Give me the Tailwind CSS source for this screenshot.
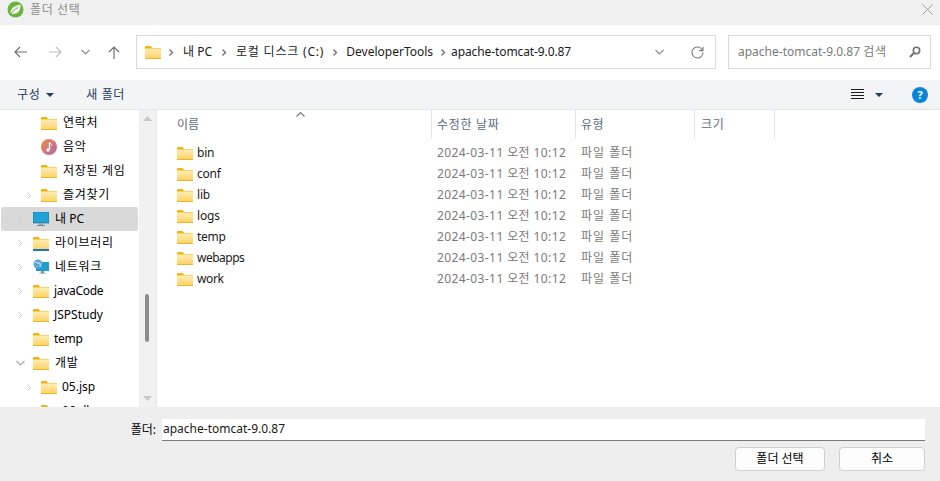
<!DOCTYPE html>
<html lang="ko"><head><meta charset="utf-8">
<script src="https://cdn.jsdelivr.net/npm/@tailwindcss/browser@4"></script>
</head>
<body class="relative w-[940px] h-[481px] overflow-hidden bg-white text-[12px] leading-[16px] text-black font-['Noto_Sans','Noto_Sans_CJK_KR',sans-serif]">
<svg class="absolute w-0 h-0" width="0" height="0">
<defs>
<linearGradient id="fg" x1="0" y1="0" x2="0" y2="1"><stop offset="0" stop-color="#ffeeb8"/><stop offset="1" stop-color="#fdd05f"/></linearGradient>
<symbol id="folder" viewBox="0 0 16 14"><path d="M0 2a1 1 0 0 1 1-1h4.500l2 2H15a1 1 0 0 1 1 1v9a1 1 0 0 1-1 1H1a1 1 0 0 1-1-1z" fill="#f5b50f"/><rect x="0" y="3.400" width="16" height="10.600" rx="1" fill="url(#fg)"/><rect x="0" y="13" width="16" height="1" fill="#f0b429"/></symbol>
<symbol id="chev" viewBox="0 0 8 12"><path d="M2 2l4 4-4 4" fill="none" stroke="#c4c4c4" stroke-width="1.300"/></symbol>
</defs>
</svg>

<!-- title bar -->
<div class="h-[25px] bg-[#f0f0f0] flex items-center pl-[7px] pr-[7px] pb-[7px]">
<svg width="17" height="17" viewBox="0 0 17 17"><circle cx="8.500" cy="8.500" r="8" fill="#6db33f"/><path d="M3.500 12.500C3 7.500 7.500 4.500 13.500 3.500c.5 5-2.500 9.500-7.500 9.500-1 0-2-.2-2.500-.5z" fill="#f4f8ee"/><path d="M4 13c2-3 4-5 7-6.500" stroke="#6db33f" fill="none"/></svg>
<span class="ml-[6px] mt-[1px] text-[#8f8f8f] tracking-[0.6px]">폴더 선택</span>
<svg class="ml-auto" width="11" height="11" viewBox="0 0 11 11"><path d="M.5.5l10 10M10.500.5l-10 10" stroke="#9a9a9a" fill="none"/></svg>
</div>

<!-- nav bar -->
<div class="h-[55px] bg-white flex items-center pb-[1px]">
<svg class="ml-[14px]" width="13" height="12" viewBox="0 0 13 12"><path d="M13 6H1M6 1L1 6l5 5" fill="none" stroke="#6f6f6f" stroke-width="1.200"/></svg>
<svg class="ml-[22px]" width="13" height="12" viewBox="0 0 13 12"><path d="M0 6h12M7 1l5 5-5 5" fill="none" stroke="#bdbdbd" stroke-width="1.200"/></svg>
<svg class="ml-[19px]" width="9" height="6" viewBox="0 0 9 6"><path d="M.5 1l4 4 4-4" fill="none" stroke="#8a8a8a" stroke-width="1.100"/></svg>
<svg class="ml-[18px]" width="12" height="13" viewBox="0 0 12 13"><path d="M6 13V1M1 6l5-5 5 5" fill="none" stroke="#6f6f6f" stroke-width="1.200"/></svg>
<div class="ml-[16px] w-[580px] h-[34px] border border-[#d9d9d9] flex items-center text-[#1a1a1a]">
<svg class="ml-[8px]" width="16" height="14"><use href="#folder"/></svg>
<svg class="ml-[7px]" width="6" height="9" viewBox="0 0 8 12"><path d="M2 2l4 4-4 4" fill="none" stroke="#666" stroke-width="1.600"/></svg>
<span class="ml-[9px]">내 PC</span>
<svg class="ml-[9px]" width="6" height="9" viewBox="0 0 8 12"><path d="M2 2l4 4-4 4" fill="none" stroke="#666" stroke-width="1.600"/></svg>
<span class="ml-[9px] tracking-[0.8px]">로컬 디스크 (C:)</span>
<svg class="ml-[8px]" width="6" height="9" viewBox="0 0 8 12"><path d="M2 2l4 4-4 4" fill="none" stroke="#666" stroke-width="1.600"/></svg>
<span class="ml-[8px]">DeveloperTools</span>
<svg class="ml-[7px]" width="6" height="9" viewBox="0 0 8 12"><path d="M2 2l4 4-4 4" fill="none" stroke="#666" stroke-width="1.600"/></svg>
<span class="ml-[5px] tracking-[-0.1px]">apache-tomcat-9.0.87</span>
<svg class="ml-auto" width="9" height="6" viewBox="0 0 9 6"><path d="M.5 1l4 4 4-4" fill="none" stroke="#8a8a8a" stroke-width="1.100"/></svg>
<svg class="ml-[27px] mr-[11px]" width="13" height="13" viewBox="0 0 13 13"><path d="M11.500 4.200A5.500 5.500 0 1 0 12 6.500M12 .8v3.800H8.200" fill="none" stroke="#7d7d7d" stroke-width="1.100"/></svg>
</div>
<div class="ml-[12px] w-[203px] h-[34px] border border-[#d9d9d9] flex items-center pl-[9px] text-[#7a7a7a]">
<span>apache-tomcat-9.0.87 <span class="tracking-[0.8px]">검색</span></span>
<svg class="ml-auto mr-[9px]" width="12" height="12" viewBox="0 0 12 12"><circle cx="7.500" cy="4.500" r="3.200" fill="none" stroke="#6f6f6f" stroke-width="1.600"/><path d="M5 7L1 11" stroke="#6f6f6f" stroke-width="2"/></svg>
</div>
</div>

<!-- toolbar -->
<div class="h-[30px] bg-[#f3f4f6] border-b border-[#e6e6e6] flex items-center text-[#1f3a5f]">
<span class="ml-[17px] tracking-[0.6px]">구성</span>
<svg class="ml-[6px]" width="8" height="4" viewBox="0 0 8 4"><path d="M0 0h8L4 4z" fill="#1f3a5f"/></svg>
<span class="ml-[32px] tracking-[0.6px]">새 폴더</span>
<svg class="ml-auto" width="13" height="11" viewBox="0 0 13 11"><path d="M0 .5h13M0 3.500h13M0 6.500h13M0 9.500h13" stroke="#1a1a1a"/></svg>
<svg class="ml-[11px]" width="8" height="4" viewBox="0 0 8 4"><path d="M0 0h8L4 4z" fill="#1f3a5f"/></svg>
<div class="ml-[29px] mr-[12px] w-[16px] h-[16px] rounded-full bg-[#0a84d8] text-white flex items-center justify-center text-[11px] font-bold">?</div>
</div>

<!-- main -->
<div class="h-[297px] flex overflow-hidden">
<!-- sidebar -->
<div class="w-[139px] shrink-0 overflow-hidden pl-[1px] pr-[1px] pt-[1px]">
<div class="h-[24px] flex items-center pl-[40px]"><svg width="16" height="14"><use href="#folder"/></svg><span class="ml-[6px] tracking-[0.7px]">연락처</span></div>
<div class="h-[24px] flex items-center pl-[40px]"><svg width="16" height="16" viewBox="0 0 16 16"><defs><linearGradient id="mu" x1="0" y1="0" x2="1" y2="1"><stop offset="0" stop-color="#ee8a4a"/><stop offset="1" stop-color="#b565a8"/></linearGradient></defs><circle cx="8" cy="8" r="8" fill="url(#mu)"/><path d="M8.500 3.500v7" stroke="#fff" stroke-width="1.400"/><circle cx="7" cy="11" r="1.700" fill="#fff"/><path d="M8.500 3.500c1 1.500 2.500 1.500 2.500 3" stroke="#fff" fill="none"/></svg><span class="ml-[6px] tracking-[0.7px]">음악</span></div>
<div class="h-[24px] flex items-center pl-[40px]"><svg width="16" height="14"><use href="#folder"/></svg><span class="ml-[6px] tracking-[0.7px]">저장된 게임</span></div>
<div class="h-[24px] flex items-center pl-[25px]"><svg width="6" height="9" viewBox="0 0 8 12"><use href="#chev"/></svg><svg class="ml-[9px]" width="16" height="14"><use href="#folder"/></svg><span class="ml-[6px] tracking-[0.7px]">즐겨찾기</span></div>
<div class="h-[24px] flex items-center pl-[16px] bg-[#d9d9d9] rounded-[2px]"><svg width="6" height="9" viewBox="0 0 8 12"><use href="#chev"/></svg><svg class="ml-[10px]" width="16" height="15" viewBox="0 0 16 15"><rect x="0" y="0" width="16" height="11" fill="#1fa3d6" stroke="#17617f" stroke-width=".6"/><path d="M6 11h4v2H6z" fill="#9aa5ad"/><path d="M4 13.500h8" stroke="#7b868e"/></svg><span class="ml-[6px]">내 PC</span></div>
<div class="h-[24px] flex items-center pl-[16px]"><svg width="6" height="9" viewBox="0 0 8 12"><use href="#chev"/></svg><svg class="ml-[10px]" width="16" height="15" viewBox="0 0 16 15"><use href="#folder" width="16" height="14"/><rect y="13" width="16" height="2" fill="#1a78c2"/></svg><span class="ml-[6px] tracking-[0.7px]">라이브러리</span></div>
<div class="h-[24px] flex items-center pl-[16px]"><svg width="6" height="9" viewBox="0 0 8 12"><use href="#chev"/></svg><svg class="ml-[10px]" width="16" height="16" viewBox="0 0 16 16"><rect x="3" y="3" width="13" height="9" fill="#1f9cc9"/><path d="M8 12h3v2H8zM6 14.500h7" fill="#8b979e" stroke="#8b979e" stroke-width=".5"/><circle cx="5" cy="5" r="4.500" fill="#5aa7dc"/><path d="M2 3c2 0 2 2 4 1s1 4 1 4" stroke="#d6ecf7" fill="none"/></svg><span class="ml-[6px] tracking-[0.7px]">네트워크</span></div>
<div class="h-[24px] flex items-center pl-[16px]"><svg width="6" height="9" viewBox="0 0 8 12"><use href="#chev"/></svg><svg class="ml-[10px]" width="16" height="14"><use href="#folder"/></svg><span class="ml-[5px] tracking-[-0.3px]">javaCode</span></div>
<div class="h-[24px] flex items-center pl-[16px]"><svg width="6" height="9" viewBox="0 0 8 12"><use href="#chev"/></svg><svg class="ml-[10px]" width="16" height="14"><use href="#folder"/></svg><span class="ml-[5px]">JSPStudy</span></div>
<div class="h-[24px] flex items-center pl-[32px]"><svg width="16" height="14"><use href="#folder"/></svg><span class="ml-[5px] tracking-[-0.3px]">temp</span></div>
<div class="h-[24px] flex items-center pl-[15px]"><svg width="9" height="6" viewBox="0 0 9 6"><path d="M.5 1l4 4 4-4" fill="none" stroke="#aaa" stroke-width="1.200"/></svg><svg class="ml-[8px]" width="16" height="14"><use href="#folder"/></svg><span class="ml-[6px] tracking-[0.7px]">개발</span></div>
<div class="h-[24px] flex items-center pl-[25px]"><svg width="6" height="9" viewBox="0 0 8 12"><use href="#chev"/></svg><svg class="ml-[9px]" width="16" height="14"><use href="#folder"/></svg><span class="ml-[5px]">05.jsp</span></div>
<div class="h-[24px] flex items-center pl-[40px]"><svg width="16" height="14"><use href="#folder"/></svg><span class="ml-[5px]">06.dbcp</span></div>
</div>
<!-- scrollbar -->
<div class="w-[18px] shrink-0 bg-[#f1f1f1] border-r border-[#e6e6e6] flex flex-col items-center justify-between py-[6px] relative">
<svg width="9" height="5" viewBox="0 0 9 5"><path d="M0 5h9L4.500 0z" fill="#c8c8c8"/></svg>
<div class="absolute left-[6px] top-[184px] w-[4px] h-[48px] bg-[#8c8c8c] rounded-full"></div>
<svg width="9" height="5" viewBox="0 0 9 5"><path d="M0 0h9L4.500 5z" fill="#c8c8c8"/></svg>
</div>
<!-- list -->
<div class="flex-1 min-w-0 text-[#7a7a7a] relative">
<div class="h-[31px] flex items-center text-[#5a6b80] pb-[2px]">
<div class="w-[275px] h-[29px] pl-[20px] flex items-center border-r border-[#e5e5e5]">이름</div>
<div class="w-[144px] h-[29px] pl-[5px] flex items-center border-r border-[#e5e5e5] tracking-[0.7px]">수정한 날짜</div>
<div class="w-[119px] h-[29px] pl-[5px] flex items-center border-r border-[#e5e5e5] tracking-[0.4px]">유형</div>
<div class="w-[80px] h-[29px] pl-[6px] flex items-center border-r border-[#e5e5e5] tracking-[0.7px]">크기</div>
<svg class="absolute left-[139px] top-[2px]" width="9" height="5" viewBox="0 0 9 5"><path d="M.5 4.500l4-4 4 4" fill="none" stroke="#777" stroke-width="1.100"/></svg>
</div>
<div class="pt-[1px]">
<div class="h-[21px] flex items-center"><div class="w-[274px] pl-[20px] flex items-center text-[#1a1a1a]"><svg width="16" height="14"><use href="#folder"/></svg><span class="ml-[4px] tracking-[-0.2px]">bin</span></div><div class="w-[144px] pl-[6px] tracking-[0.4px]">2024-03-11 오전 10:12</div><div class="pl-[6px] tracking-[1px]">파일 폴더</div></div>
<div class="h-[21px] flex items-center"><div class="w-[274px] pl-[20px] flex items-center text-[#1a1a1a]"><svg width="16" height="14"><use href="#folder"/></svg><span class="ml-[4px] tracking-[-0.2px]">conf</span></div><div class="w-[144px] pl-[6px] tracking-[0.4px]">2024-03-11 오전 10:12</div><div class="pl-[6px] tracking-[1px]">파일 폴더</div></div>
<div class="h-[21px] flex items-center"><div class="w-[274px] pl-[20px] flex items-center text-[#1a1a1a]"><svg width="16" height="14"><use href="#folder"/></svg><span class="ml-[4px] tracking-[-0.2px]">lib</span></div><div class="w-[144px] pl-[6px] tracking-[0.4px]">2024-03-11 오전 10:12</div><div class="pl-[6px] tracking-[1px]">파일 폴더</div></div>
<div class="h-[21px] flex items-center"><div class="w-[274px] pl-[20px] flex items-center text-[#1a1a1a]"><svg width="16" height="14"><use href="#folder"/></svg><span class="ml-[4px] tracking-[-0.2px]">logs</span></div><div class="w-[144px] pl-[6px] tracking-[0.4px]">2024-03-11 오전 10:12</div><div class="pl-[6px] tracking-[1px]">파일 폴더</div></div>
<div class="h-[21px] flex items-center"><div class="w-[274px] pl-[20px] flex items-center text-[#1a1a1a]"><svg width="16" height="14"><use href="#folder"/></svg><span class="ml-[4px] tracking-[-0.3px]">temp</span></div><div class="w-[144px] pl-[6px] tracking-[0.4px]">2024-03-11 오전 10:12</div><div class="pl-[6px] tracking-[1px]">파일 폴더</div></div>
<div class="h-[21px] flex items-center"><div class="w-[274px] pl-[20px] flex items-center text-[#1a1a1a]"><svg width="16" height="14"><use href="#folder"/></svg><span class="ml-[4px] tracking-[-0.5px]">webapps</span></div><div class="w-[144px] pl-[6px] tracking-[0.4px]">2024-03-11 오전 10:12</div><div class="pl-[6px] tracking-[1px]">파일 폴더</div></div>
<div class="h-[21px] flex items-center"><div class="w-[274px] pl-[20px] flex items-center text-[#1a1a1a]"><svg width="16" height="14"><use href="#folder"/></svg><span class="ml-[4px] tracking-[-0.4px]">work</span></div><div class="w-[144px] pl-[6px] tracking-[0.4px]">2024-03-11 오전 10:12</div><div class="pl-[6px] tracking-[1px]">파일 폴더</div></div>
</div>
</div>
</div>

<!-- footer -->
<div class="h-[74px] bg-[#eeeeee] pt-[12px] pr-[15px]">
<div class="flex items-center justify-end">
<span class="mr-[6px]">폴더:</span>
<div class="w-[763px] h-[22px] bg-white border-b border-[#7a7a7a] pl-[1px] pb-[1px] flex items-center text-[#1a1a1a]">apache-tomcat-9.0.87</div>
</div>
<div class="flex justify-end gap-[14px] mt-[6px]">
<div class="w-[90px] h-[24px] bg-[#fdfdfd] border border-[#cfcfcf] rounded-[4px] flex items-center justify-center">폴더 선택</div>
<div class="w-[86px] h-[24px] bg-[#fdfdfd] border border-[#cfcfcf] rounded-[4px] flex items-center justify-center">취소</div>
</div>
</div>
</body></html>
